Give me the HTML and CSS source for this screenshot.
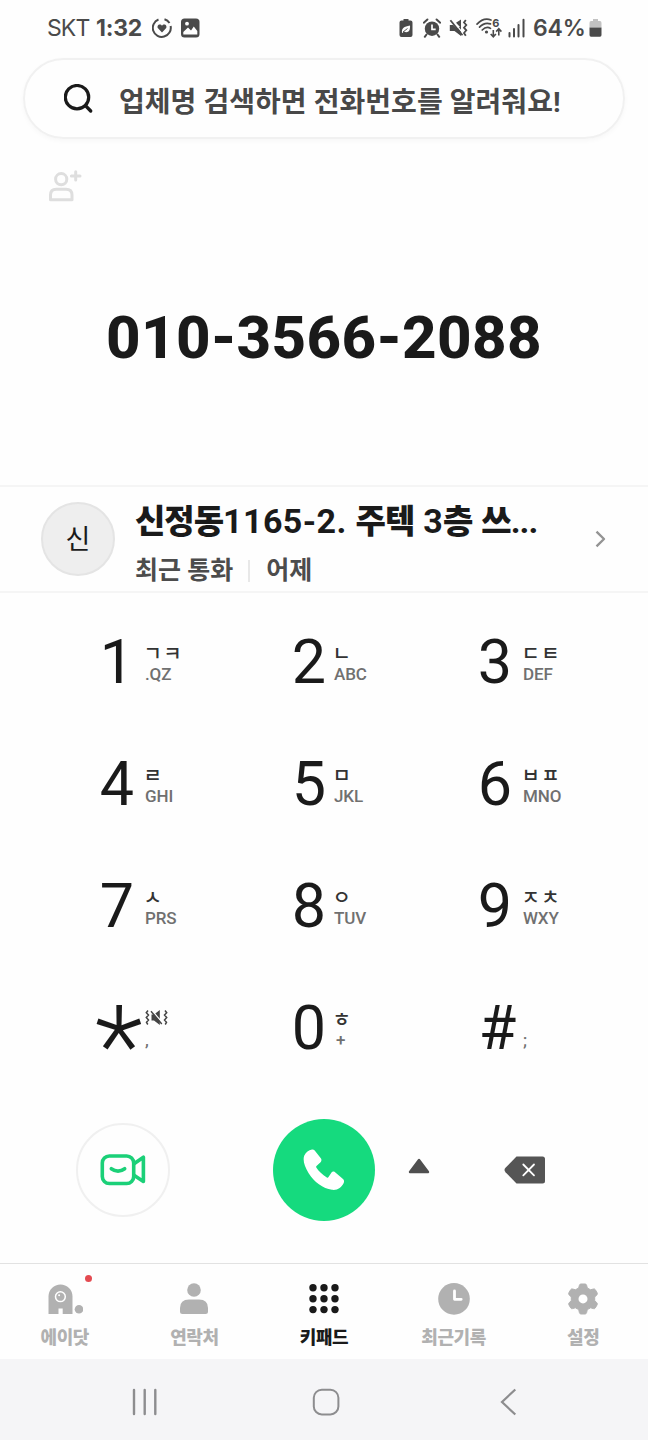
FILE: index.html
```html
<!DOCTYPE html>
<html lang="ko">
    <head>
        <meta charset="UTF-8">
        <title>키패드</title>
        <link rel="stylesheet" href="styles.css">
    </head>
    <body>
        <div class="statusBar">
            <span class="carrier">SKT</span>
            <span class="clock">1:32</span>
            <svg class="icoHeart" width="20" height="20" viewBox="0 0 20 20">
                <path d="M6.5 1.5A9 9 0 1 0 18.6 8M12.5 1.3A9 9 0 0 1 17.5 5" fill="none" stroke="#4a4a4a" stroke-width="2"/>
                <path d="M10 14.5L6 10.3C4.8 8.6 6 6.4 7.8 6.4C8.8 6.4 9.5 6.9 10 7.7C10.5 6.9 11.2 6.4 12.2 6.4C14 6.4 15.2 8.6 14 10.3Z" fill="#4a4a4a"/>
            </svg>
            <svg class="icoImage" width="19" height="20" viewBox="0 0 19 20">
                <rect x="0" y="0.5" width="18.5" height="19" rx="3.5" fill="#4a4a4a"/>
                <path d="M2.3 16.5V14L7 9.5L10 12.5L12.8 8.5L16.3 13V16.5Z" fill="#fff"/>
                <circle cx="6" cy="5.7" r="1.9" fill="#fff"/>
            </svg>
            <div class="statusRight">
                <svg width="14" height="20" viewBox="0 0 14 20">
                    <path d="M4.5 1H9.5V2.5H11.5Q13.5 2.5 13.5 4.5V17Q13.5 19 11.5 19H2.5Q0.5 19 0.5 17V4.5Q0.5 2.5 2.5 2.5H4.5Z" fill="#4a4a4a"/>
                    <path d="M3 14.8C2.5 10 5 8.7 11 7.5C11.5 13 9 15.3 4.8 13.6L3.5 15Z" fill="#fff"/>
                    <path d="M4 14L8.5 10.5" stroke="#4a4a4a" stroke-width="0.9"/>
                </svg>
                <svg class="icoAlarm" width="18" height="20" viewBox="0 0 18 20">
                    <circle cx="9" cy="10.7" r="7.2" fill="#4a4a4a"/>
                    <path d="M0.8 4.7L4.4 1.5M17.2 4.7L13.6 1.5M3.5 16.5L1.8 18.8M14.5 16.5L16.2 18.8" stroke="#4a4a4a" stroke-width="2" stroke-linecap="round"/>
                    <path d="M9 6.5V11.3H12.7" fill="none" stroke="#fff" stroke-width="1.7"/>
                </svg>
                <svg class="icoMute" width="20" height="20" viewBox="0 0 20 20">
                    <path d="M0.8 7H4.2L8 10.5L12 8V18L5.5 13H0.8Z" fill="#4a4a4a"/>
                    <path d="M7 4.8L12 1.5V10Z" fill="#4a4a4a"/>
                    <path d="M3.2 2L13.8 15" stroke="#fff" stroke-width="1.2"/>
                    <path d="M1.4 2.2L13.5 17.3" stroke="#4a4a4a" stroke-width="1.8"/>
                    <path d="M16.8 2L15 4.5L17.3 7L15 9.7L17.3 12.3L15 15L16.8 17.8" fill="none" stroke="#4a4a4a" stroke-width="1.8"/>
                </svg>
                <svg class="icoWifi" width="27" height="24" viewBox="0 -2 27 24">
                    <path d="M1 6.2Q7.5 -0.8 15 2M3.5 9.2Q8.5 3.8 14.5 5.9M6.2 12Q10.5 7.8 14.5 10.4" fill="none" stroke="#4a4a4a" stroke-width="1.7" stroke-linecap="round"/>
                    <circle cx="10.5" cy="14" r="1.6" fill="#4a4a4a"/>
                    <text x="16.3" y="9" class="wifiNo">6</text>
                    <path d="M17.3 12V18.5M14.7 16L17.3 18.8L19.9 16M22.8 17.5V11M20.2 13.6L22.8 10.8L25.4 13.6" fill="none" stroke="#4a4a4a" stroke-width="1.6"/>
                </svg>
                <svg class="icoSignal" width="18" height="20" viewBox="0 0 18 20">
                    <path d="M1.5 15V18.5M6 11V18.5M10.5 7V18.5M15.5 1.8V18.5" stroke="#4a4a4a" stroke-width="2" stroke-linecap="round"/>
                </svg>
                <span class="percent">64%</span>
                <svg class="icoBattery" width="13" height="20" viewBox="0 0 13 20">
                    <path d="M4 1H9V3H11Q12.5 3 12.5 5V9.5H0.5V5Q0.5 3 2 3H4Z" fill="#c2c2c2"/>
                    <path d="M0.5 9.5H12.5V17Q12.5 18.7 11 18.7H2Q0.5 18.7 0.5 17Z" fill="#4a4a4a"/>
                </svg>
            </div>
        </div>

        <div class="search">
            <svg width="30" height="30" viewBox="0 0 30 30">
                <circle cx="13" cy="13.2" r="11.7" fill="none" stroke="#1a1a1a" stroke-width="3.2"/>
                <path d="M21.7 21.9L26.7 27" stroke="#1a1a1a" stroke-width="3.4" stroke-linecap="round"/>
            </svg>
            <span class="searchText">업체명 검색하면 전화번호를 알려줘요!</span>
        </div>

        <div class="dialArea">
            <svg class="addContact" width="34" height="32" viewBox="0 0 34 32">
                <g fill="none" stroke="#dedede" stroke-width="3">
                    <circle cx="13.2" cy="9.2" r="5.6"/>
                    <path d="M2.5 29.7V25Q2.5 19.2 8.3 19.2H18Q24 19.2 24 25V29.7Z" stroke-linejoin="round"/>
                    <path d="M27.7 1.8V10M23.4 5.9H32" stroke-linecap="round"/>
                </g>
            </svg>
            <div class="number">010-3566-2088</div>
        </div>

        <div class="contact">
            <div class="avatar">신</div>
            <div class="contactInfo">
                <div class="contactName"><span class="ko">신정동</span>1165-2. <span class="ko">주텍</span> 3<span class="ko">층</span> <span class="ko">쓰</span><span class="dots">...</span></div>
                <div class="contactMeta"><span>최근 통화</span><i class="bar"></i><span>어제</span></div>
            </div>
            <svg class="chevron" width="12" height="18" viewBox="0 0 12 18">
                <path d="M1.5 1.7L9 9L1.5 16.3" fill="none" stroke="#949494" stroke-width="2.4" stroke-linejoin="round"/>
            </svg>
        </div>

        <div class="keypad">
            <div class="key"><b>1</b><div class="sub"><span>ㄱㅋ</span><em>.QZ</em></div></div>
            <div class="key mid"><b>2</b><div class="sub"><span>ㄴ</span><em>ABC</em></div></div>
            <div class="key"><b>3</b><div class="sub"><span>ㄷㅌ</span><em>DEF</em></div></div>
            <div class="key"><b>4</b><div class="sub"><span>ㄹ</span><em>GHI</em></div></div>
            <div class="key mid"><b>5</b><div class="sub"><span>ㅁ</span><em>JKL</em></div></div>
            <div class="key"><b>6</b><div class="sub"><span>ㅂㅍ</span><em>MNO</em></div></div>
            <div class="key"><b>7</b><div class="sub"><span>ㅅ</span><em>PRS</em></div></div>
            <div class="key mid"><b>8</b><div class="sub"><span>ㅇ</span><em>TUV</em></div></div>
            <div class="key"><b>9</b><div class="sub"><span>ㅈㅊ</span><em>WXY</em></div></div>
            <div class="key">
                <b class="star">*</b>
                <div class="sub">
                    <svg width="23" height="23" viewBox="0 0 23 23">
                        <path d="M3 4.5L1.3 6.7L3.5 9L1.3 11.5L3.5 14L1.5 16.3L2.8 18.5M20 4.5L21.7 6.7L19.5 9L21.7 11.5L19.5 14L21.5 16.3L20.2 18.5" fill="none" stroke="#444" stroke-width="1.5"/>
                        <path d="M6.5 8.5H9L14.8 4V19L9 14.5H6.5Z" fill="#444"/>
                        <path d="M7.5 5.3L17.5 16.8" stroke="#fff" stroke-width="1.4"/>
                        <path d="M6 5.3L16.8 18" stroke="#444" stroke-width="1.4"/>
                    </svg>
                    <em>,</em>
                </div>
            </div>
            <div class="key mid"><b>0</b><div class="sub"><span>ㅎ</span><em class="plus">+</em></div></div>
            <div class="key"><b class="hash">#</b><div class="sub"><span></span><em>;</em></div></div>
        </div>

        <div class="actions">
            <div class="video">
                <svg width="46" height="32" viewBox="0 0 46 32">
                    <g fill="none" stroke="#1bd078" stroke-width="3.6" stroke-linecap="round" stroke-linejoin="round">
                        <rect x="2.3" y="2" width="31.4" height="27.5" rx="7"/>
                        <path d="M34 9.8L43.4 3.2V27.5L34 21.3"/>
                        <path d="M11.3 14.7Q18 19.5 24.7 14.7"/>
                    </g>
                </svg>
            </div>
            <div class="call">
                <svg width="42" height="42" viewBox="0 0 42 42">
                    <path d="M9 .5C10 .3 11 .8 11.7 1.5L18 9.5C18.7 10.8 18.5 12 17.8 13L13.5 17C13 17.5 13 18 13.3 18.6C15.5 22 19.5 26 23.8 28.5C24.6 28.9 25 28.8 25.5 28L28.5 23.5C29.3 22.5 30.5 22.3 31.8 23L40 30C41.2 31 41.3 32.5 40.7 34C38.5 38.5 34.5 41.5 29 40.8C20 39.5 11 33 5.5 24C1.5 17.5 -.5 11 1.3 6.5C3 3 5.5 1 9 .5Z" fill="#fff"/>
                </svg>
            </div>
            <svg class="up" width="22" height="16" viewBox="0 0 22 16">
                <path d="M11 2L20 14H2Z" fill="#4f4f4f" stroke="#4f4f4f" stroke-width="2.4" stroke-linejoin="round"/>
            </svg>
            <svg class="erase" width="42" height="28" viewBox="0 0 42 28">
                <path d="M12.5 0.5H38.5Q41 0.5 41 3V25Q41 27.5 38.5 27.5H12.5L1.5 16.2Q-0.5 14 1.5 11.8Z" fill="#555"/>
                <path d="M19.3 8.5L30 19.3M30 8.5L19.3 19.3" stroke="#fff" stroke-width="1.8" stroke-linecap="round"/>
            </svg>
        </div>

        <div class="tabs">
            <div class="tab">
                <svg width="36" height="32" viewBox="0 0 36 32">
                    <path d="M1.5 31V13.5A12 12 0 0 1 25.5 13.5V31H15.7V25.5H11.5V31Z" fill="#b1b1b1"/>
                    <circle cx="13.4" cy="13.7" r="4.9" fill="none" stroke="#fff" stroke-width="1.5"/>
                    <circle cx="12.1" cy="12.2" r="1" fill="#fff"/>
                    <circle cx="32" cy="26.3" r="4.3" fill="#b1b1b1"/>
                </svg>
                <span>에이닷</span>
                <i class="dot"></i>
            </div>
            <div class="tab">
                <svg width="30" height="32" viewBox="0 0 30 32">
                    <circle cx="15" cy="7" r="6.8" fill="#b1b1b1"/>
                    <path d="M1 31V25Q1 16.5 10 16.5H20Q29 16.5 29 25V28.5Q29 31 26.5 31H3.5Q1 31 1 28.5Z" fill="#b1b1b1"/>
                </svg>
                <span>연락처</span>
            </div>
            <div class="tab active">
                <svg width="30" height="32" viewBox="0 0 30 32">
                    <g fill="#1a1a1a">
                        <circle cx="4" cy="4.8" r="3.7"/><circle cx="15" cy="4.8" r="3.7"/><circle cx="26" cy="4.8" r="3.7"/>
                        <circle cx="4" cy="15.7" r="3.7"/><circle cx="15" cy="15.7" r="3.7"/><circle cx="26" cy="15.7" r="3.7"/>
                        <circle cx="4" cy="26.6" r="3.7"/><circle cx="15" cy="26.6" r="3.7"/><circle cx="26" cy="26.6" r="3.7"/>
                    </g>
                </svg>
                <span>키패드</span>
            </div>
            <div class="tab">
                <svg width="32" height="32" viewBox="0 0 32 32">
                    <circle cx="16" cy="15.9" r="15.8" fill="#b1b1b1"/>
                    <path d="M16.5 8V16.3H23.2" fill="none" stroke="#fff" stroke-width="2.8" stroke-linecap="round" stroke-linejoin="round"/>
                </svg>
                <span>최근기록</span>
            </div>
            <div class="tab">
                <svg width="32" height="32" viewBox="0 0 32 32">
                    <path d="M14 1H18Q19.3 1 19.6 2.3L20.3 5L23.6 6.8L26.4 6Q27.6 5.6 28.3 6.7L30.1 9.8Q30.7 11 29.8 11.9L27.7 14V17.6L29.8 19.7Q30.7 20.6 30.1 21.8L28.3 24.9Q27.6 26 26.4 25.6L23.6 24.8L20.3 26.6L19.6 29.6Q19.3 31 18 31H14Q12.7 31 12.4 29.6L11.7 26.6L8.4 24.8L5.6 25.6Q4.4 26 3.7 24.9L1.9 21.8Q1.3 20.6 2.2 19.7L4.3 17.6V14L2.2 11.9Q1.3 11 1.9 9.8L3.7 6.7Q4.4 5.6 5.6 6L8.4 6.8L11.7 5L12.4 2.3Q12.7 1 14 1Z" fill="#b1b1b1" stroke="#b1b1b1" stroke-width="1" stroke-linejoin="round"/>
                    <circle cx="16" cy="15.9" r="4.5" fill="#fff"/>
                </svg>
                <span>설정</span>
            </div>
        </div>

        <div class="sysNav">
            <svg width="26" height="28" viewBox="0 0 26 28">
                <path d="M2 2V26M12.7 2V26M23.3 2V26" stroke="#8d8d8f" stroke-width="2.4" stroke-linecap="round"/>
            </svg>
            <svg class="home" width="28" height="28" viewBox="0 0 28 28">
                <rect x="1.8" y="1.8" width="24.6" height="24.6" rx="8" fill="none" stroke="#8d8d8f" stroke-width="2"/>
            </svg>
            <svg class="back" width="17" height="28" viewBox="0 0 17 28">
                <path d="M15.3 1.5L2 14L15.3 26.5" fill="none" stroke="#8d8d8f" stroke-width="2.2"/>
            </svg>
        </div>
    </body>
</html>
```
FILE: styles.css
```css
* {
    box-sizing: border-box;
}

body {
    margin: 0;
    width: 648px;
    height: 1440px;
    overflow: hidden;
    background: #fefefe;
    color: #1a1a1a;
    font-family: Roboto, "Noto Sans CJK KR", sans-serif;
}

svg {
    display: block;
    flex: none;
}

/* status bar */
.statusBar {
    display: flex;
    align-items: center;
    height: 56px;
    padding: 0 46px 0 47px;
    font-family: Inter, sans-serif;
    font-size: 23px;
    line-height: 56px;
    color: #4a4a4a;
    white-space: nowrap;
}

.carrier {
    width: 49px;
    letter-spacing: -0.9px;
}

.clock {
    width: 56px;
    font-weight: 700;
    letter-spacing: -0.2px;
}

.icoImage {
    margin-left: 9px;
}

.statusRight {
    display: flex;
    align-items: center;
    margin-left: auto;
}

.icoAlarm {
    margin-left: 10px;
}

.icoMute {
    margin-left: 8px;
}

.icoWifi {
    margin-left: 7px;
    overflow: visible;
}

.wifiNo {
    font-family: Inter, sans-serif;
    font-size: 11px;
    font-weight: 700;
    line-height: 12px;
    fill: #4a4a4a;
}

.icoSignal {
    margin-left: 5px;
}

.percent {
    width: 55px;
    margin-left: 7px;
    font-weight: 600;
    letter-spacing: -0.2px;
}

.icoBattery {
    margin-left: 1px;
}

/* search box */
.search {
    display: flex;
    align-items: center;
    width: 602px;
    height: 81px;
    margin: 2px auto 0;
    padding: 0 0 0 39px;
    border: 2px solid #f1f1f1;
    border-radius: 41px;
    box-shadow: 0 2px 5px rgba(0, 0, 0, 0.03);
}

.searchText {
    margin-left: 25px;
    padding-top: 9px;
    font-size: 28px;
    font-weight: 700;
    line-height: 40px;
    letter-spacing: 0.05px;
    color: #484848;
    white-space: nowrap;
}

/* typed number */
.dialArea {
    height: 346px;
    padding-top: 31px;
}

.addContact {
    margin-left: 48px;
}

.number {
    margin-top: 98px;
    font-size: 60px;
    font-weight: 800;
    line-height: 76px;
    letter-spacing: 0.35px;
    text-align: center;
    white-space: nowrap;
}

/* matched contact */
.contact {
    display: flex;
    align-items: center;
    height: 108px;
    padding: 0 41px 0 41px;
    border-top: 2px solid #f5f5f5;
    border-bottom: 2px solid #f5f5f5;
}

.avatar {
    flex: none;
    width: 74px;
    height: 74px;
    border: 2px solid #e4e4e4;
    border-radius: 50%;
    background: #eee;
    font-size: 27px;
    line-height: 73px;
    text-align: center;
}

.contactInfo {
    flex: 1;
    margin-left: 20px;
    padding-top: 11px;
    white-space: nowrap;
}

.contactName {
    height: 52px;
    font-size: 34px;
    font-weight: 700;
    line-height: 51px;
    letter-spacing: 0.4px;
}

.contactName .ko {
    font-size: 33px;
    font-weight: 900;
    letter-spacing: -1px;
}

.contactName .dots {
    letter-spacing: -0.9px;
}

.contactMeta {
    display: flex;
    align-items: center;
    height: 46px;
    font-size: 25px;
    font-weight: 700;
    line-height: 46px;
    color: #4c4c4c;
}

.bar {
    width: 2px;
    height: 22px;
    margin: 0 16px 0 15px;
    background: #e8e8e8;
}

/* keypad */
.keypad {
    display: grid;
    grid-template-columns: repeat(3, 189px);
    grid-auto-rows: 122px;
    height: 488px;
    margin-top: 8px;
    padding-left: 95px;
}

.key {
    display: flex;
    align-items: center;
}

.key b {
    flex: none;
    width: 50px;
    padding-right: 6px;
    font-size: 61px;
    font-weight: 400;
    line-height: 122px;
    text-align: center;
}

.key.mid b {
    padding-right: 0;
}

.key .star {
    height: 122px;
    padding-right: 5px;
    font-size: 112px;
    font-weight: 300;
    line-height: 158px;
}

.key .hash {
    padding-right: 1px;
}

.sub {
    display: flex;
    flex-direction: column;
    align-items: flex-start;
    height: 44px;
}

.sub span {
    height: 23px;
    margin-left: -1.5px;
    font-size: 20px;
    font-weight: 500;
    line-height: 29px;
    letter-spacing: 1.4px;
    color: #333;
}

.sub em {
    height: 21px;
    font-size: 17px;
    font-weight: 500;
    font-style: normal;
    line-height: 22px;
    letter-spacing: -0.1px;
    color: #707070;
}

.sub .plus {
    padding-left: 2px;
}

/* bottom buttons */
.actions {
    display: flex;
    align-items: center;
    height: 174px;
    padding: 0 0 12px 76px;
}

.video,
.call {
    display: flex;
    align-items: center;
    justify-content: center;
    border-radius: 50%;
}

.video {
    width: 94px;
    height: 94px;
    border: 2px solid #f0f0f0;
}

.call {
    width: 102px;
    height: 102px;
    margin-left: 103px;
    background: #15da7e;
}

.up {
    margin: -8px 0 0 33px;
}

.erase {
    margin-left: 74px;
}

/* tab bar */
.tabs {
    display: grid;
    grid-template-columns: repeat(5, 1fr);
    height: 96px;
    border-top: 1px solid #e2e2e2;
}

.tab {
    position: relative;
    display: flex;
    flex-direction: column;
    align-items: center;
    padding-top: 19px;
    font-size: 18px;
    font-weight: 900;
    line-height: 28px;
    letter-spacing: -0.4px;
    color: #b1b1b1;
}

.tab svg {
    margin-bottom: 9px;
}

.tab.active {
    color: #1a1a1a;
}

.dot {
    position: absolute;
    top: 11px;
    left: 85px;
    width: 7px;
    height: 7px;
    border-radius: 50%;
    background: #e44b51;
}

/* system navigation */
.sysNav {
    display: flex;
    align-items: center;
    height: 81px;
    padding: 4px 0 0 132px;
    background: #f5f5f7;
}

.sysNav .home {
    margin-left: 154px;
}

.sysNav .back {
    margin-left: 160px;
}
```
